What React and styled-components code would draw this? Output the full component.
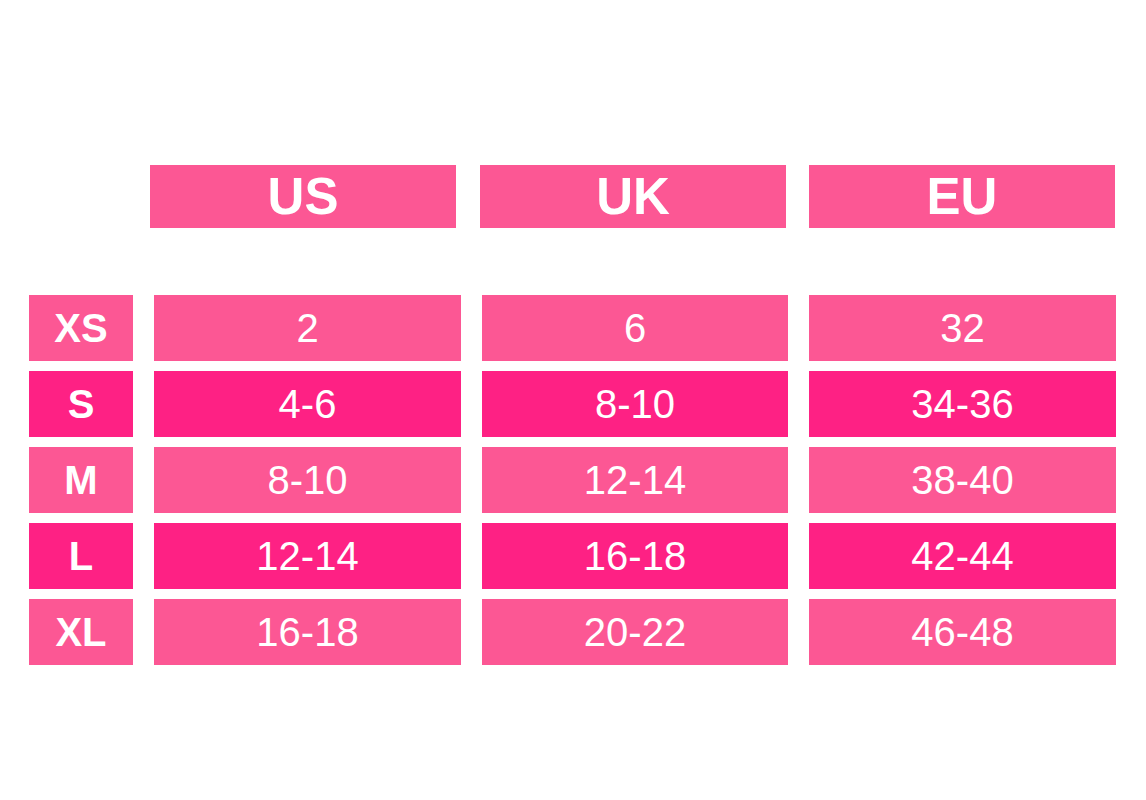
import React from "react";
import styled, { createGlobalStyle } from "styled-components";

const GlobalStyle = createGlobalStyle`
  body {
    margin: 0;
    background: #ffffff;
    font-family: "Liberation Sans", Arial, sans-serif;
  }
`;

const colors = {
  light: "#fc5794",
  dark: "#fe2184",
};

const Page = styled.main`
  padding: 165px 0 0 29px;
  width: 1146px;
  height: 800px;
  box-sizing: border-box;
`;

const Chart = styled.div`
  display: grid;
  grid-template-columns: 104px 307px 306px 307px;
  grid-template-rows: 63px 47px repeat(5, 66px);
  column-gap: 21px;
  row-gap: 10px;
`;

const HeaderCell = styled.div`
  width: 306px;
  margin-left: ${(props) => props.$shift}px;
  background: ${colors.light};
  color: #fff;
  font-size: 51px;
  font-weight: 700;
  display: flex;
  align-items: center;
  justify-content: center;
`;

const HeaderSpacer = styled.div`
  grid-column: 1 / -1;
`;

const Cell = styled.div`
  background: ${(props) => (props.$dark ? colors.dark : colors.light)};
  color: #fff;
  font-size: 40px;
  font-weight: ${(props) => (props.$label ? 700 : 400)};
  display: flex;
  align-items: center;
  justify-content: center;
`;

const Blank = styled.div``;

const regions = [
  { name: "US", shift: -4 },
  { name: "UK", shift: -2 },
  { name: "EU", shift: 0 },
];

const sizes = [
  { label: "XS", values: ["2", "6", "32"] },
  { label: "S", values: ["4-6", "8-10", "34-36"] },
  { label: "M", values: ["8-10", "12-14", "38-40"] },
  { label: "L", values: ["12-14", "16-18", "42-44"] },
  { label: "XL", values: ["16-18", "20-22", "46-48"] },
];

export default function App() {
  return (
    <>
      <GlobalStyle />
      <Page>
        <Chart>
          <Blank />
          {regions.map((region) => (
            <HeaderCell key={region.name} $shift={region.shift}>
              {region.name}
            </HeaderCell>
          ))}
          <HeaderSpacer />
          {sizes.map((size, i) => {
            const dark = i % 2 === 1;
            return (
              <React.Fragment key={size.label}>
                <Cell $label $dark={dark}>
                  {size.label}
                </Cell>
                {size.values.map((value, j) => (
                  <Cell key={j} $dark={dark}>
                    {value}
                  </Cell>
                ))}
              </React.Fragment>
            );
          })}
        </Chart>
      </Page>
    </>
  );
}
